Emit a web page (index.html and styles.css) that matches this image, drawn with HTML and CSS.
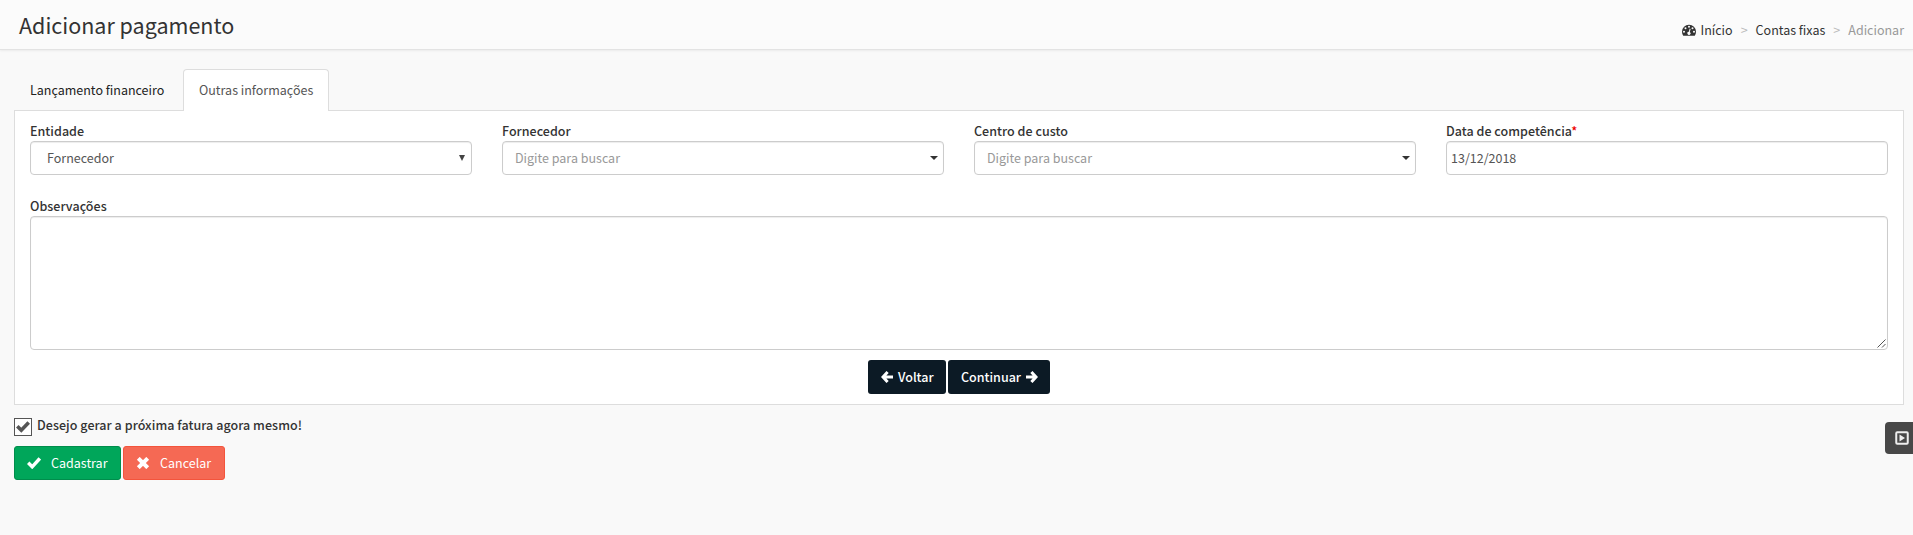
FILE: index.html
```html
<!DOCTYPE html>
<html lang="pt-BR">
<head>
<meta charset="utf-8">
<title>Adicionar pagamento</title>
<link rel="stylesheet" href="styles.css">
</head>
<body>
<header class="page-header">
  <h1 class="page-title">Adicionar pagamento</h1>
  <nav class="breadcrumb">
    <svg class="icon-dash" viewBox="0 0 14 12"><path fill="#333" fill-rule="evenodd" d="M7 .8a7 7 0 0 0-7 7c0 1.3.4 2.600 1.100 3.700.1.200.2.200.4.200h11c.2 0 .3 0 .4-.2.700-1.100 1.100-2.400 1.100-3.700a7 7 0 0 0-7-7zM2 6.800a1 1 0 1 1 0 2 1 1 0 0 1 0-2zM3.500 3.300a1 1 0 1 1 0 2 1 1 0 0 1 0-2zM7 1.800a1 1 0 1 1 0 2 1 1 0 0 1 0-2zM10.500 3.300a1 1 0 1 1 0 2 1 1 0 0 1 0-2zM12 6.800a1 1 0 1 1 0 2 1 1 0 0 1 0-2zM7.700 4.600l.9.300-.8 3a1.600 1.600 0 1 1-1-.2z"/></svg>
    <a class="crumb">Início</a><span class="sep">&gt;</span><a class="crumb">Contas fixas</a><span class="sep">&gt;</span><span class="crumb-current">Adicionar</span>
  </nav>
</header>
<main class="content">
  <div class="tabs">
    <a class="tab">Lançamento financeiro</a>
    <a class="tab tab-active">Outras informações</a>
  </div>
  <section class="panel">
    <div class="fields">
      <div class="field"><label class="label">Entidade</label>
        <div class="control control-select"><span>Fornecedor</span><svg class="arrow" viewBox="0 0 6 6"><path fill="#444" d="M0 0h6L3 6z"/></svg></div></div>
      <div class="field"><label class="label">Fornecedor</label>
        <div class="control control-search"><span>Digite para buscar</span><i class="caret"></i></div></div>
      <div class="field"><label class="label">Centro de custo</label>
        <div class="control control-search"><span>Digite para buscar</span><i class="caret"></i></div></div>
      <div class="field"><label class="label">Data de competência<span class="required">*</span></label>
        <div class="control control-date"><span>13/12/2018</span></div></div>
    </div>
    <div class="field notes"><label class="label">Observações</label>
      <div class="notes-box"><svg class="grip" viewBox="0 0 9 9"><path fill="none" stroke="#555" d="M.5 8.500l8-8M5 8.500L8.500 5"/></svg></div></div>
    <div class="steps">
      <button class="btn btn-dark"><svg class="icon-arrow" viewBox="0 0 12 12"><path fill="none" stroke="#fff" stroke-width="3" d="M6.600 1L2 6l4.600 5M2.500 6H12"/></svg>Voltar</button>
      <button class="btn btn-dark btn-next">Continuar<svg class="icon-arrow" viewBox="0 0 12 12"><path fill="none" stroke="#fff" stroke-width="3" d="M5.400 1L10 6l-4.600 5M9.500 6H0"/></svg></button>
    </div>
  </section>
  <label class="check-row"><span class="check"><svg class="check-mark" viewBox="0 0 14 12"><path fill="none" stroke="#555" stroke-width="3.600" d="M1.300 5.200l4 4L12.700 1.500"/></svg></span><span class="check-text">Desejo gerar a próxima fatura agora mesmo!</span></label>
  <div class="actions">
    <button class="btn btn-green"><svg class="icon-action" viewBox="0 0 14 12"><path fill="none" stroke="#fff" stroke-width="3.400" d="M1.200 5.800l4 4 7.600-8.300"/></svg>Cadastrar</button>
    <button class="btn btn-red"><svg class="icon-action" viewBox="0 0 14 12"><path fill="none" stroke="#fff" stroke-width="4" d="M2.300 1.300l9.400 9.400M11.700 1.300l-9.400 9.400"/></svg>Cancelar</button>
  </div>
</main>
<div class="side-toggle"><svg class="side-icon" viewBox="0 0 14 14"><rect x="1.250" y="1.250" width="11.500" height="11.500" rx="1" fill="none" stroke="#eee" stroke-width="2"/><path fill="#eee" d="M4.500 3.500L10 7l-5.500 3.500z"/></svg></div>
</body>
</html>
```
FILE: styles.css
```css
* { box-sizing: border-box; }
body { margin: 0; height: 535px; overflow: hidden; background: #f9f9f9; color: #333; font-family: "Noto Sans CJK SC", "Noto Sans", sans-serif; font-size: 12.5px; line-height: 20px; }
.page-header { height: 50px; padding: 0 9px 0 19px; display: flex; justify-content: space-between; background: #fbfbfb; border-bottom: 1px solid #e3e3e3; box-shadow: 0 1px 2px rgba(0,0,0,.06); }
.page-title { margin: 10px 0 0; font-size: 21.5px; line-height: 30px; font-weight: 400; }
.breadcrumb { display: flex; height: 20px; margin-top: 20px; white-space: nowrap; }
.icon-dash { width: 14px; height: 12px; margin: 4px 5px 0 0; }
.sep { color: #bbb; margin: 0 8px; }
.crumb-current { color: #999; }
.content { padding: 19px 9px 0 14px; }
.tabs { display: flex; height: 42px; margin-bottom: -1px; position: relative; }
.tab { padding: 11px 16px 0; width: 169px; color: #222; white-space: nowrap; }
.tab-active { width: 146px; padding-left: 15px; color: #555; background: #fff; border: 1px solid #ddd; border-bottom: 0; border-radius: 4px 4px 0 0; padding-top: 10px; }
.panel { height: 295px; border: 1px solid #ddd; background: #fff; padding: 10px 15px 0; }
.fields { display: grid; grid-template-columns: repeat(4, 1fr); gap: 30px; }
.label { display: block; height: 20px; font-weight: 500; letter-spacing: .03px; white-space: nowrap; }
.required { color: #e00; }
.control { height: 34px; border: 1px solid #ccc; border-radius: 4px; display: flex; justify-content: space-between; align-items: center; box-shadow: inset 0 1px 1px rgba(0,0,0,.075); color: #555; }
.control-select { padding: 0 6px 0 16px; }
.control-search { padding: 0 5px 0 12px; color: #999; }
.control-date { padding-left: 4px; }
.arrow { width: 6px; height: 6px; }
.caret { border: 4px solid transparent; border-top-color: #333; border-bottom: 0; }
.notes { margin-top: 21px; }
.notes-box { height: 134px; border: 1px solid #ccc; border-radius: 4px; display: flex; justify-content: flex-end; align-items: flex-end; padding: 1px; box-shadow: inset 0 1px 1px rgba(0,0,0,.075); }
.grip { width: 9px; height: 9px; }
.steps { display: flex; justify-content: center; gap: 2px; margin-top: 10px; }
.btn { height: 34px; border: 1px solid transparent; border-radius: 3px; padding: 0 12px; display: flex; align-items: center; font: 400 12.5px/20px "Noto Sans CJK SC", "Noto Sans", sans-serif; color: #fff; white-space: nowrap; }
.btn-dark { background: #0c1a25; width: 78px; gap: 5px; font-weight: 500; }
.btn-next { width: 102px; }
.icon-arrow { width: 12px; height: 12px; flex: none; }
.check-row { display: flex; height: 18px; margin-top: 13px; }
.check { width: 18px; height: 18px; border: 1px solid #555; background: #fff; padding: 2px 1px; display: flex; }
.check-mark { width: 14px; height: 12px; }
.check-text { margin: -3px 0 0 5px; font-weight: 500; letter-spacing: .05px; white-space: nowrap; }
.actions { display: flex; gap: 2px; margin-top: 10px; }
.icon-action { width: 14px; height: 12px; margin-right: 10px; flex: none; }
.btn-green { width: 107px; background: #00a65a; border-color: #008d4c; }
.btn-red { width: 102px; background: #f56954; border-color: #f4543c; }
.side-toggle { position: absolute; right: 0; top: 422px; width: 28px; height: 32px; background: #484848; border-radius: 4px 0 0 4px; padding: 9px 0 0 10px; }
.side-icon { width: 14px; height: 14px; display: block; }
```
